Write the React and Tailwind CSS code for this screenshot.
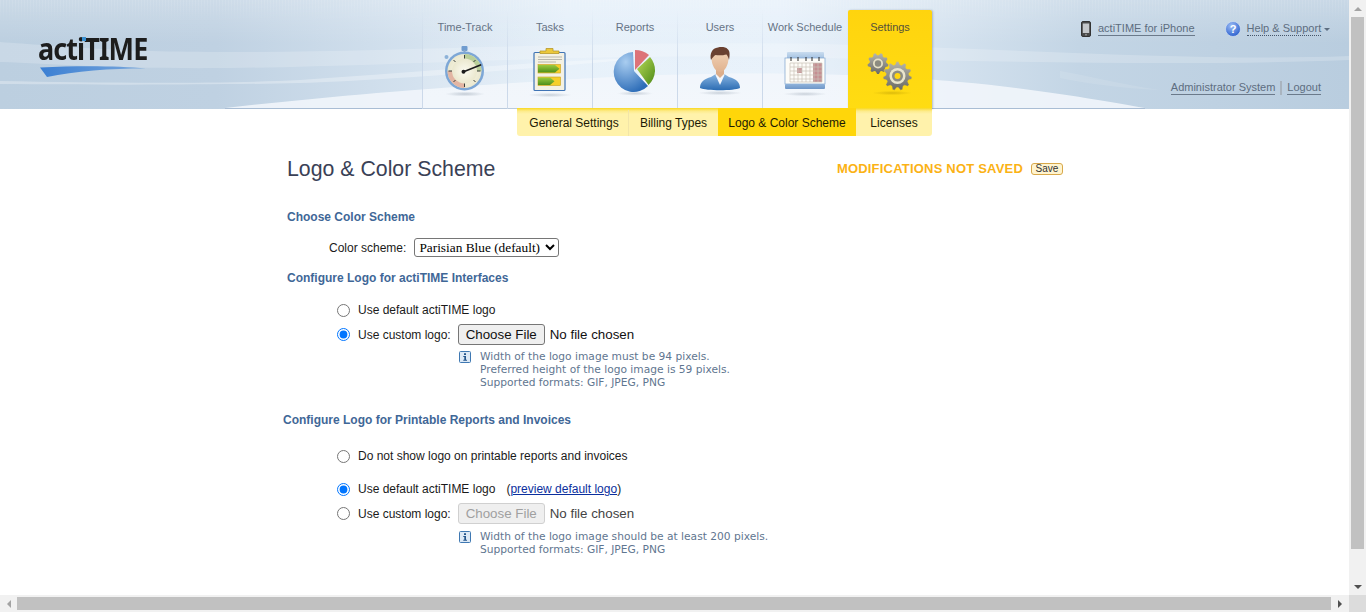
import React from "react";

const Stopwatch = () => (
  <svg width="56" height="56" viewBox="0 0 56 56">
    <defs>
      <radialGradient id="swFace" cx="50%" cy="50%" r="55%"><stop offset="0" stopColor="#fbfaf0" /><stop offset="1" stopColor="#e9e6cb" /></radialGradient>
      <radialGradient id="swShadow"><stop offset="0" stopColor="#8a98a8" stopOpacity=".45" /><stop offset="1" stopColor="#8a98a8" stopOpacity="0" /></radialGradient>
    </defs>
    <ellipse cx="28" cy="49" rx="20" ry="2.500" fill="url(#swShadow)" />
    <rect x="24.500" y="1" width="6" height="5" rx="1" fill="#6f9ccf" />
    <rect x="26.500" y="5" width="2" height="3" fill="#8aa8c8" />
    <circle cx="9.500" cy="12" r="2" fill="#8db2d8" />
    <circle cx="27.500" cy="26" r="19.500" fill="#7da7d6" />
    <circle cx="27.500" cy="26" r="17" fill="url(#swFace)" />
    <path d="M27.500 26V9A17 17 0 0 1 44.500 26z" fill="#b9cf9a" />
    <path d="M27.500 26H10.500A17 17 0 0 0 27.500 43z" fill="#e2b5a3" />
    <circle cx="27.500" cy="26" r="12.500" fill="url(#swFace)" />
    <path d="M27.500 10v3.500M27.500 38.500v3.500M11.500 26h3.500M40 26h3.500M16.500 15l2 2M38.500 15l-2 2M16.500 37l2-2M38.500 37l-2-2" stroke="#3a3f3a" strokeWidth="1" />
    <path d="M26 27L43.500 20" stroke="#1b1b1b" strokeWidth="1.800" strokeLinecap="round" />
    <circle cx="26.500" cy="26.700" r="2" fill="#1b1b1b" />
  </svg>
);

const Clipboard = () => (
  <svg width="56" height="56" viewBox="-3 -2 56 56">
    <defs>
      <radialGradient id="cbShadow"><stop offset="0" stopColor="#8a98a8" stopOpacity=".4" /><stop offset="1" stopColor="#8a98a8" stopOpacity="0" /></radialGradient>
      <linearGradient id="cbArrow" x1="0" y1="0" x2="0" y2="1"><stop offset="0" stopColor="#9ccb3f" /><stop offset="1" stopColor="#4e8f1a" /></linearGradient>
    </defs>
    <ellipse cx="25" cy="48" rx="22" ry="2.200" fill="url(#cbShadow)" />
    <rect x="9" y="5.500" width="31" height="38" rx="1" fill="#f4f1e3" stroke="#3f74b5" strokeWidth="1.200" />
    <path d="M15 6.500V4h6V1.500h7V4h6v2.500z" fill="#ecc83a" stroke="#b8992a" strokeWidth=".8" />
    <path d="M13 10h24M13 12.500h24M13 15h18" stroke="#a9a9a0" strokeWidth=".8" />
    <rect x="13" y="17.500" width="22.500" height="8.500" fill="#f6cf2a" stroke="#c79f20" strokeWidth=".6" />
    <path d="M13 18h17l4.500 3.700-4.500 3.800H13z" fill="url(#cbArrow)" />
    <rect x="13" y="30" width="22.500" height="8.500" fill="#f6cf2a" stroke="#c79f20" strokeWidth=".6" />
    <path d="M13 30.500h12l4.500 3.700-4.500 3.800H13z" fill="url(#cbArrow)" />
  </svg>
);

const Pie = () => (
  <svg width="56" height="56" viewBox="0 0 56 56">
    <defs>
      <radialGradient id="pieBlue" cx="35%" cy="25%" r="80%"><stop offset="0" stopColor="#a9cdf0" /><stop offset="1" stopColor="#2d6db8" /></radialGradient>
      <linearGradient id="pieGreen" x1="0" y1="0" x2="1" y2="1"><stop offset="0" stopColor="#b9da58" /><stop offset="1" stopColor="#4d8a17" /></linearGradient>
      <radialGradient id="piShadow"><stop offset="0" stopColor="#8a98a8" stopOpacity=".4" /><stop offset="1" stopColor="#8a98a8" stopOpacity="0" /></radialGradient>
    </defs>
    <ellipse cx="28" cy="48.500" rx="18" ry="2.200" fill="url(#piShadow)" />
    <path d="M26 7L27 26L41 41A20 20 0 1 1 26 7z" fill="url(#pieBlue)" />
    <path d="M28 5A22 22 0 0 1 42 10L28 25z" fill="#dd7378" />
    <path d="M43 12A20 20 0 0 1 41.500 40L30 24z" fill="url(#pieGreen)" />
  </svg>
);

const User = () => (
  <svg width="56" height="56" viewBox="0 0 56 56">
    <defs>
      <linearGradient id="usSuit" x1="0" y1="0" x2="0" y2="1"><stop offset="0" stopColor="#86b3e0" /><stop offset="1" stopColor="#2b6cb3" /></linearGradient>
      <linearGradient id="usFace" x1="0" y1="0" x2="0" y2="1"><stop offset="0" stopColor="#f3d4b8" /><stop offset="1" stopColor="#e0b28f" /></linearGradient>
      <radialGradient id="usShadow"><stop offset="0" stopColor="#8a98a8" stopOpacity=".4" /><stop offset="1" stopColor="#8a98a8" stopOpacity="0" /></radialGradient>
    </defs>
    <ellipse cx="28" cy="48" rx="22" ry="2.200" fill="url(#usShadow)" />
    <path d="M8 43c0-6 4-9 11-11l4-2.500h10l4 2.500c7 2 11 5 11 11-6 3-34 3-40 0z" fill="url(#usSuit)" />
    <path d="M23.500 30l4.500 10 4.500-10-2-2h-5z" fill="#f4f7fb" />
    <path d="M24 22h8v7l-4 4-4-4z" fill="#dcae8b" />
    <path d="M19.500 13c0-6 3.500-9 8.500-9s8.500 3 8.500 9c0 7-4 14-8.500 14s-8.500-7-8.500-14z" fill="url(#usFace)" />
    <path d="M19 15c-1.500-6 1-12 7-12.500 3-1 8-.5 9.500 1.500 2.500 1.500 2.500 6 1.500 11-.5-2.500-1.500-4.500-2.500-5.500-3.500 1-8.500 1-11 .5-1.500 1-3 2.500-4.500 5z" fill="#6a4030" />
  </svg>
);

const Calendar = () => (
  <svg width="56" height="56" viewBox="0 0 56 56">
    <defs>
      <linearGradient id="calTop" x1="0" y1="0" x2="0" y2="1"><stop offset="0" stopColor="#c9dcef" /><stop offset="1" stopColor="#a0bfe0" /></linearGradient>
      <linearGradient id="calBot" x1="0" y1="0" x2="0" y2="1"><stop offset="0" stopColor="#8fb2da" /><stop offset="1" stopColor="#6f97c8" /></linearGradient>
      <radialGradient id="caShadow"><stop offset="0" stopColor="#8a98a8" stopOpacity=".4" /><stop offset="1" stopColor="#8a98a8" stopOpacity="0" /></radialGradient>
    </defs>
    <ellipse cx="28" cy="49" rx="22" ry="2.200" fill="url(#caShadow)" />
    <rect x="10" y="7" width="37" height="7" rx="1" fill="url(#calTop)" />
    <rect x="8" y="13" width="40" height="26" fill="#fdfcf8" stroke="#7da3cf" strokeWidth=".7" />
    <rect x="8" y="39" width="40" height="5" rx="1" fill="url(#calBot)" />
    <rect x="20" y="23" width="5" height="5" fill="#c99a9c" />
    <rect x="36" y="18" width="9" height="19" fill="#c58f92" />
    {[13, 17, 21, 25, 29, 33, 37, 41, 45].map((x) => <path key={x} d={`M${x} 18V37`} stroke="#c9c2b8" strokeWidth=".7" fill="none" />)}
    {[18, 22, 26, 30, 34, 37].map((y) => <path key={y} d={`M13 ${y}H45`} stroke="#c9c2b8" strokeWidth=".7" fill="none" />)}
    {[14, 21, 29, 35, 42].map((x) => <path key={x} d={`M${x} 12V16`} stroke="#2a2a2a" strokeWidth="1" fill="none" />)}
  </svg>
);

const gearPath = (cx, cy, r, teeth) => {
  const pts = [];
  const n = teeth * 4;
  for (let i = 0; i < n; i++) {
    const a = ((i + 0.5) / n) * Math.PI * 2;
    const rad = i % 4 < 2 ? r : r * 0.8;
    pts.push(`${(cx + rad * Math.cos(a)).toFixed(2)} ${(cy + rad * Math.sin(a)).toFixed(2)}`);
  }
  return "M" + pts.join("L") + "z";
};

const Gears = () => (
  <svg width="56" height="56" viewBox="0 0 56 56">
    <defs>
      <linearGradient id="grM" x1="0" y1="0" x2="0" y2="1"><stop offset="0" stopColor="#b5b5ad" /><stop offset="1" stopColor="#6a6a64" /></linearGradient>
      <radialGradient id="grS"><stop offset="0" stopColor="#a88a00" stopOpacity=".4" /><stop offset="1" stopColor="#a88a00" stopOpacity="0" /></radialGradient>
    </defs>
    <ellipse cx="30" cy="48" rx="20" ry="2.200" fill="url(#grS)" />
    <path d={gearPath(16, 18.5, 10.5, 9)} fill="url(#grM)" />
    <circle cx="16" cy="18.500" r="5" fill="#e6e0c4" />
    <circle cx="16" cy="18.500" r="3.200" fill="#8b8b80" />
    <path d={gearPath(35.5, 31, 14.5, 11)} fill="url(#grM)" stroke="#ffd60f" strokeWidth=".5" />
    <circle cx="35.500" cy="31" r="8" fill="#e9e5cc" />
    <circle cx="35.500" cy="31" r="5.500" fill="#8c8c83" />
    <circle cx="35.500" cy="31" r="3" fill="#ffd60f" />
  </svg>
);

const Info = () => (
  <svg width="12" height="12" viewBox="0 0 12 12" className="shrink-0">
    <rect x=".5" y=".5" width="11" height="11" rx="1" fill="#dce9f6" stroke="#3f78b2" />
    <path d="M5 2.300h2v1.600H5zM4.300 5h2.700v3.700h1v1H4.300v-1h1V6h-1z" fill="#23558c" />
  </svg>
);

const Phone = () => (
  <svg width="10" height="16" viewBox="0 0 10 16">
    <rect x=".5" y=".5" width="9" height="15" rx="1.500" fill="#4a4a4a" stroke="#333" />
    <rect x="1.800" y="2.500" width="6.400" height="9.500" fill="#c4c7ca" />
    <circle cx="5" cy="13.700" r=".9" fill="#999" />
  </svg>
);

const Help = () => (
  <svg width="16" height="16" viewBox="0 0 16 16">
    <defs><radialGradient id="hp" cx="40%" cy="30%" r="70%"><stop offset="0" stopColor="#9dbdf5" /><stop offset="1" stopColor="#2f63cf" /></radialGradient></defs>
    <circle cx="8" cy="8" r="7.500" fill="url(#hp)" stroke="#d6e2f2" strokeWidth=".7" />
    <text x="8" y="12" textAnchor="middle" fontSize="11" fontWeight="700" fontFamily="Liberation Sans" fill="#fff">?</text>
  </svg>
);

const HeaderArt = () => (
  <svg className="absolute inset-0" width="1349" height="109" viewBox="0 0 1349 109" preserveAspectRatio="none">
    <defs>
      <linearGradient id="hBase" x1="0" y1="0" x2="1" y2="0">
        <stop offset="0" stopColor="#bccfe0" />
        <stop offset=".16" stopColor="#bfd1e2" />
        <stop offset=".31" stopColor="#d4e2ef" />
        <stop offset=".42" stopColor="#e4eff9" />
        <stop offset=".58" stopColor="#e6f0fa" />
        <stop offset=".68" stopColor="#d8e5f1" />
        <stop offset=".8" stopColor="#c3d5e5" />
        <stop offset="1" stopColor="#b9cddf" />
      </linearGradient>
      <linearGradient id="hTop" x1="0" y1="0" x2="0" y2="1">
        <stop offset="0" stopColor="#ffffff" stopOpacity=".22" />
        <stop offset=".4" stopColor="#ffffff" stopOpacity="0" />
      </linearGradient>
      <pattern id="hStripe" width="3" height="24" patternUnits="userSpaceOnUse">
        <rect width="1" height="24" fill="#ffffff" fillOpacity=".1" />
      </pattern>
      <linearGradient id="hFade" x1="0" y1="0" x2="0" y2="1">
        <stop offset="0" stopColor="#fff" stopOpacity="1" />
        <stop offset="1" stopColor="#fff" stopOpacity="0" />
      </linearGradient>
      <mask id="hMask"><rect width="1349" height="24" fill="url(#hFade)" /></mask>
    </defs>
    <rect width="1349" height="109" fill="url(#hBase)" />
    <rect width="1349" height="109" fill="url(#hTop)" />
    <rect width="1349" height="24" fill="url(#hStripe)" mask="url(#hMask)" />
    <path d="M0 42C60 46 110 52 230 52C400 52 600 40 820 44C1000 48 1200 62 1349 56V60C1200 66 1000 62 820 58C600 52 400 66 230 68C110 69 60 64 0 62z" fill="#fff" fillOpacity=".2" />
    <path d="M0 81C100 83 220 84 300 80C400 74 520 62 640 58C640 60 400 80 300 83C220 85 100 85 0 84z" fill="#fff" fillOpacity=".3" />
    <path d="M1060 71C1090 76 1120 84 1160 90C1120 88 1090 84 1060 78z" fill="#fff" fillOpacity=".1" />
    <path d="M225 108C330 96 430 88 560 80C700 70 860 72 960 82C1030 88 1100 100 1145 108z" fill="#f1f5fb" fillOpacity=".9" />
    <rect x="225" y="108" width="920" height="1" fill="#a9bdd4" />
  </svg>
);

const tabs = [
  ["Time-Track", Stopwatch],
  ["Tasks", Clipboard],
  ["Reports", Pie],
  ["Users", User],
  ["Work Schedule", Calendar],
];

const Tab = ({ label, Icon }) => (
  <div className="w-[85px] h-[99px] flex bg-[linear-gradient(180deg,rgba(255,255,255,0)_0%,rgba(255,255,255,0.2)_100%)]">
    <div className="w-px h-full bg-[linear-gradient(180deg,rgba(200,214,232,0)_0%,rgba(200,214,232,0.9)_55%)]" />
    <div className="flex-1 flex flex-col items-center">
      <div className="h-[17px] mt-[9px] leading-[17px] text-[11px] text-[#667385] whitespace-nowrap">{label}</div>
      <div className="mt-[9px]"><Icon /></div>
    </div>
  </div>
);

const Radio = ({ checked, name }) => (
  <input type="radio" name={name} defaultChecked={checked} className="w-[13px] h-[13px] m-0 shrink-0" />
);

const Option = ({ checked, name, children, className = "" }) => (
  <div className={`flex items-center pl-[50px] text-[12px] text-[#1a1a1a] ${className}`}>
    <Radio checked={checked} name={name} />
    <span className="ml-[8px] flex items-center">{children}</span>
  </div>
);

const FileBox = ({ disabled }) => (
  <input
    type="file"
    disabled={disabled}
    className={`ml-[7px] w-[260px] text-[13.33px] leading-[16px] font-['Liberation_Sans',sans-serif] file:h-[21px] file:w-[87px] file:mr-[5px] file:rounded-[3px] file:border file:border-solid file:text-[13.33px] file:p-0 ${disabled ? "text-[#444] file:border-[#d0d0d0] file:bg-[#efefef] file:text-[#a0a0a0]" : "text-[#111] file:border-[#767676] file:bg-[#efefef] file:text-[#111]"}`}
  />
);

const Hint = ({ lines, className = "" }) => (
  <div className={`flex pl-[172px] ${className}`}>
    <div className="mt-[1px]"><Info /></div>
    <div className="ml-[9px] text-[10.67px] leading-[13px] text-[#5f7690] font-['DejaVu_Sans',sans-serif]">
      {lines.map((l) => <div key={l}>{l}</div>)}
    </div>
  </div>
);

const H2 = ({ children, className = "" }) => (
  <div className={`text-[12px] font-bold text-[#3f6797] leading-[14px] ${className}`}>{children}</div>
);

export default function App() {
  return (
    <div className="w-[1366px] h-[612px] overflow-hidden flex flex-col bg-white font-['Liberation_Sans',Arial,sans-serif]">
      <div className="flex flex-1 min-h-0">
        <div className="w-[1349px] flex flex-col">
          <header className="relative h-[109px] shrink-0 flex">
            <HeaderArt />
            <div className="relative w-[422px] pl-[38px] pt-[31px]">
              <div className="relative w-[112px] h-[46px]">
                <div className="flex items-baseline font-['Noto_Sans',sans-serif] font-bold text-[30px] leading-[36px] tracking-[-1px] text-[#1d1d1d] origin-left scale-x-[0.9] whitespace-nowrap">
                  <span>actiTIME</span>
                </div>
                <span className="absolute left-[44px] top-[6px] w-[4px] h-[4px] bg-[#3a8fd0]" />
                <svg className="absolute left-[2px] top-[35px]" width="108" height="12" viewBox="0 0 108 12">
                  <defs><linearGradient id="lg" x1="0" y1="0" x2="1" y2="0"><stop offset="0" stopColor="#3b7fd3" /><stop offset="1" stopColor="#7aa8dc" /></linearGradient></defs>
                  <path d="M0 1.500C40 -.5 80 0 106 2.500C70 2.500 35 5 7 11z" fill="url(#lg)" />
                </svg>
              </div>
            </div>
            <div className="relative flex items-end">
              {tabs.map(([label, Icon]) => <Tab key={label} label={label} Icon={Icon} />)}
              <div className="ml-px w-[84px] h-[99px] flex flex-col items-center rounded-t-[2px] bg-[linear-gradient(180deg,#ffd40e,#ffdc12)] shadow-[1px_0_2px_rgba(90,110,140,0.4)]">
                <div className="h-[17px] mt-[9px] leading-[17px] text-[11px] text-[#55513a]">Settings</div>
                <div className="mt-[9px]"><Gears /></div>
              </div>
            </div>
            <div className="relative flex-1 text-[#5d6d80] text-[11px]">
              <div className="flex items-center pl-[149px] pt-[21px] h-[37px]">
                <Phone />
                <span className="ml-[7px] leading-[13px] border-b border-[#6b7a8b]">actiTIME for iPhone</span>
                <span className="ml-[30px]"><Help /></span>
                <span className="ml-[6px] leading-[13px] border-b border-dotted border-[#45556a]">Help &amp; Support</span>
                <span className="ml-[3px] w-0 h-0 border-x-[3px] border-x-transparent border-t-[3px] border-t-[#5d6d80]" />
              </div>
              <div className="flex items-center justify-end pr-[28px] mt-[44px] h-[14px]">
                <span className="leading-[13px] border-b border-[#6b7a8b]">Administrator System</span>
                <span className="mx-[5px] w-[2px] h-[14px] bg-[#a9b4bf]" />
                <span className="leading-[13px] border-b border-[#6b7a8b]">Logout</span>
              </div>
            </div>
          </header>

          <nav className="relative h-[28px] ml-[517px] w-[415px] flex shrink-0 rounded-b-[3px] overflow-hidden pt-[2px] text-[12px] text-[#1c1a05] -mt-[1px] bg-[linear-gradient(180deg,#f9d820_0px,#fdeb8a_3px,#fff2ab_6px)]">
            <div className="w-[112px] pl-[3px] flex items-center justify-center border-r border-[#f2e5a8]">General Settings</div>
            <div className="w-[89px] flex items-center justify-center">Billing Types</div>
            <div className="w-[138px] flex items-center justify-center bg-[#ffd60a] -mt-[2px] pt-[2px]">Logo &amp; Color Scheme</div>
            <div className="w-[76px] flex items-center justify-center">Licenses</div>
          </nav>

          <main className="flex-1 min-h-0 pl-[287px]">
            <div className="w-[776px] flex items-center justify-between mt-[20px] h-[26px]">
              <h1 className="text-[21.3px] leading-[26px] text-[#3a4156]">Logo &amp; Color Scheme</h1>
              <div className="flex items-center">
                <span className="text-[13px] font-bold text-[#fbb215] tracking-[0.2px]">MODIFICATIONS NOT SAVED</span>
                <span className="ml-[8px] w-[32px] h-[12px] flex items-center justify-center text-[10px] leading-none text-[#333] rounded-[3px] border border-[#d8a84a] bg-[#fff4cf]">Save</span>
              </div>
            </div>

            <H2 className="mt-[28px]">Choose Color Scheme</H2>

            <div className="flex items-center h-[19px] mt-[14px] pl-[42px] text-[12px] text-[#1a1a1a]">
              <span>Color scheme:</span>
              <select defaultValue="p" className="ml-[8px] w-[145px] h-[19px] rounded-[3px] border border-[#767676] text-[13.33px] leading-none text-black font-['Liberation_Serif',serif]">
                <option value="p">Parisian Blue (default)</option>
              </select>
            </div>

            <H2 className="mt-[14px]">Configure Logo for actiTIME Interfaces</H2>

            <Option name="a" className="mt-[18px] h-[14px]">Use default actiTIME logo</Option>
            <Option name="a" checked className="mt-[7px] h-[21px]">Use custom logo:<FileBox /></Option>
            <Hint className="mt-[5px]" lines={["Width of the logo image must be 94 pixels.", "Preferred height of the logo image is 59 pixels.", "Supported formats: GIF, JPEG, PNG"]} />

            <H2 className="mt-[24px] -ml-[4px]">Configure Logo for Printable Reports and Invoices</H2>

            <Option name="b" className="mt-[22px] h-[14px]">Do not show logo on printable reports and invoices</Option>
            <Option name="b" checked className="mt-[19px] h-[14px]">
              Use default actiTIME logo
              <span className="ml-[11px]">(<a className="text-[#0b2f9e] underline">preview default logo</a>)</span>
            </Option>
            <Option name="b" className="mt-[7px] h-[21px]">Use custom logo:<FileBox disabled /></Option>
            <Hint className="mt-[6px]" lines={["Width of the logo image should be at least 200 pixels.", "Supported formats: GIF, JPEG, PNG"]} />
          </main>
        </div>

        <div className="w-[17px] bg-[#f1f1f1] flex flex-col items-center shrink-0">
          <div className="h-[17px] flex items-center justify-center"><span className="w-0 h-0 border-x-[4px] border-x-transparent border-b-[4px] border-b-[#a3a3a3]" /></div>
          <div className="h-[532px] w-[13px] bg-[#c1c1c1]" />
          <div className="flex-1" />
          <div className="h-[17px] flex items-center justify-center"><span className="w-0 h-0 border-x-[4px] border-x-transparent border-t-[4px] border-t-[#505050]" /></div>
        </div>
      </div>

      <div className="h-[17px] flex shrink-0 bg-[#f1f1f1]">
        <div className="w-[17px] flex items-center justify-center"><span className="w-0 h-0 border-y-[4px] border-y-transparent border-r-[4px] border-r-[#a3a3a3]" /></div>
        <div className="w-[1314px] h-[13px] mt-[2px] bg-[#c1c1c1]" />
        <div className="w-[18px] flex items-center justify-center"><span className="w-0 h-0 border-y-[4px] border-y-transparent border-l-[4px] border-l-[#505050]" /></div>
        <div className="w-[17px] bg-[#dcdcdc]" />
      </div>
    </div>
  );
}
